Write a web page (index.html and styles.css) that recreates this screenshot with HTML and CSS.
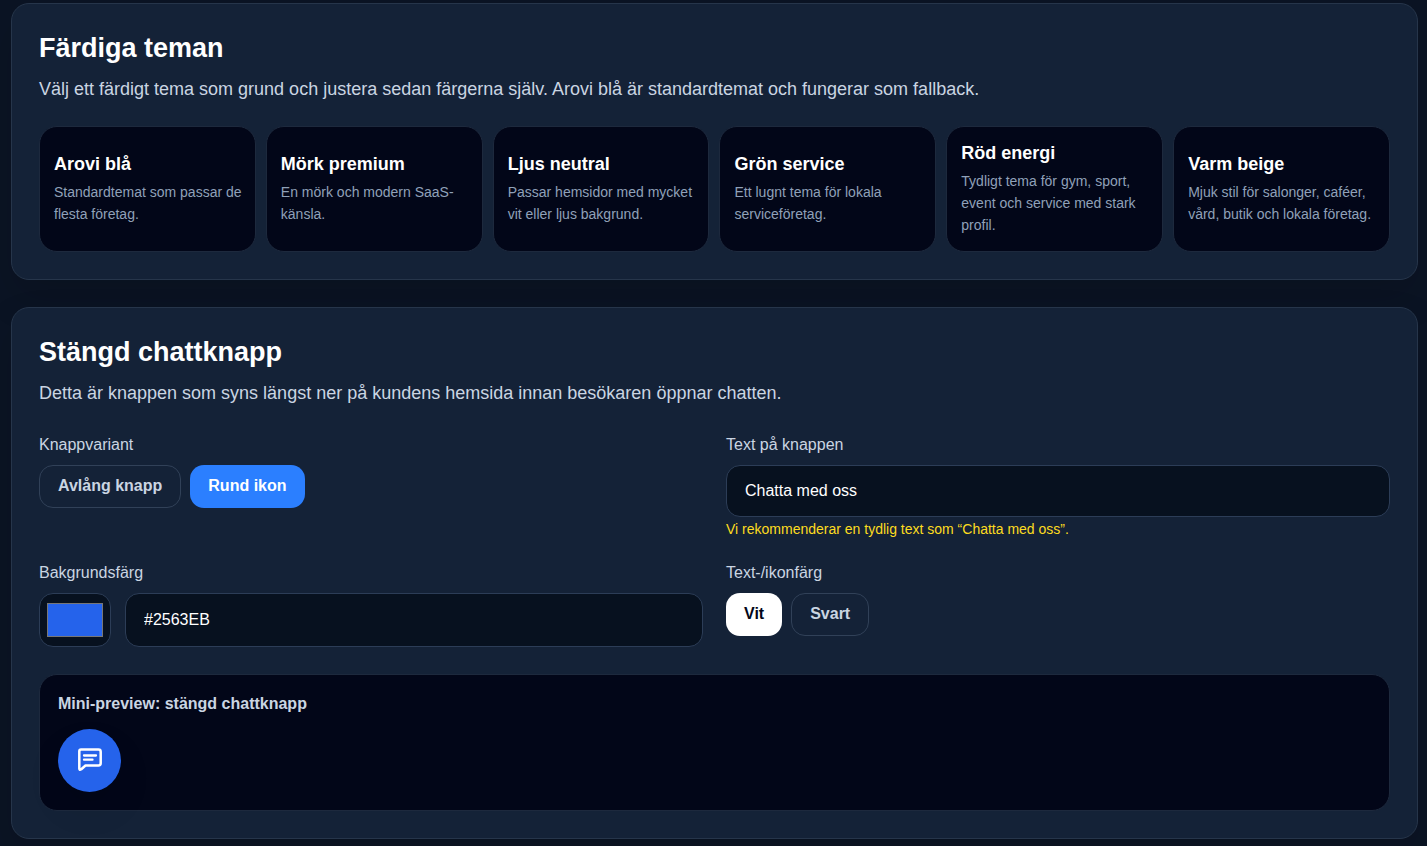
FILE: index.html
```html
<!DOCTYPE html>
<html lang="sv">
<head>
<meta charset="utf-8">
<meta name="viewport" content="width=device-width, initial-scale=1">
<title>Chattutseende</title>
<link rel="stylesheet" href="styles.css">
</head>
<body>
<main class="page">
  <section class="panel">
    <h2 class="panel-title">Färdiga teman</h2>
    <p class="panel-intro">Välj ett färdigt tema som grund och justera sedan färgerna själv. Arovi blå är standardtemat och fungerar som fallback.</p>
    <div class="themes">
      <button type="button" class="theme"><span class="theme-name">Arovi blå</span><span class="theme-text">Standardtemat som passar de flesta företag.</span></button>
      <button type="button" class="theme"><span class="theme-name">Mörk premium</span><span class="theme-text">En mörk och modern SaaS-känsla.</span></button>
      <button type="button" class="theme"><span class="theme-name">Ljus neutral</span><span class="theme-text">Passar hemsidor med mycket vit eller ljus bakgrund.</span></button>
      <button type="button" class="theme"><span class="theme-name">Grön service</span><span class="theme-text">Ett lugnt tema för lokala serviceföretag.</span></button>
      <button type="button" class="theme"><span class="theme-name">Röd energi</span><span class="theme-text">Tydligt tema för gym, sport, event och service med stark profil.</span></button>
      <button type="button" class="theme"><span class="theme-name">Varm beige</span><span class="theme-text">Mjuk stil för salonger, caféer, vård, butik och lokala företag.</span></button>
    </div>
  </section>

  <section class="panel">
    <h2 class="panel-title">Stängd chattknapp</h2>
    <p class="panel-intro">Detta är knappen som syns längst ner på kundens hemsida innan besökaren öppnar chatten.</p>
    <div class="fields">
      <div class="field" role="group" aria-labelledby="variant-label">
        <span class="label" id="variant-label">Knappvariant</span>
        <div class="choices">
          <button type="button" class="choice">Avlång knapp</button>
          <button type="button" class="choice choice-blue" aria-pressed="true">Rund ikon</button>
        </div>
      </div>
      <div class="field">
        <label class="label" for="button-text">Text på knappen</label>
        <input class="text-input" id="button-text" type="text" value="Chatta med oss">
        <p class="hint">Vi rekommenderar en tydlig text som “Chatta med oss”.</p>
      </div>
      <div class="field">
        <label class="label" for="bg-hex">Bakgrundsfärg</label>
        <div class="color-row">
          <input class="color-input" type="color" value="#2563eb" aria-label="Välj bakgrundsfärg">
          <input class="text-input" id="bg-hex" type="text" value="#2563EB">
        </div>
      </div>
      <div class="field" role="group" aria-labelledby="fg-label">
        <span class="label" id="fg-label">Text-/ikonfärg</span>
        <div class="choices">
          <button type="button" class="choice choice-white" aria-pressed="true">Vit</button>
          <button type="button" class="choice">Svart</button>
        </div>
      </div>
    </div>
    <div class="preview">
      <p class="preview-title">Mini-preview: stängd chattknapp</p>
      <button type="button" class="chat-button" aria-label="Öppna chatten">
        <svg class="chat-icon" viewBox="0 0 27 27" fill="none" stroke="currentColor" stroke-linecap="round" stroke-linejoin="round" aria-hidden="true">
          <path stroke-width="2.5" d="M5 2.500H22.500A2.200 2.200 0 0 1 24.700 4.700V16.300A2.200 2.200 0 0 1 22.500 18.500H9.500L5.300 22.300Q3.300 23.600 3.300 21.500V4.200A1.700 1.700 0 0 1 5 2.500Z"/>
          <path stroke-width="2.300" d="M8 8.500H20M8 12.700H16.500"/>
        </svg>
      </button>
    </div>
  </section>
</main>
</body>
</html>
```
FILE: styles.css
```css
* { box-sizing: border-box; }

body {
  margin: 0;
  background: #0b1424;
  color: #fff;
  font-family: "Liberation Sans", Arial, sans-serif;
  font-size: 16px;
  line-height: 24px;
}

h2, p { margin: 0; }

button, input { font: inherit; }
button { cursor: pointer; }

.page {
  display: flex;
  flex-direction: column;
  gap: 27px;
  padding: 3px 9px 7px 11px;
}

.panel {
  padding: 28px 27px 27px;
  border: 1px solid #26354a;
  border-radius: 18px;
  background: #142237;
  box-shadow: 0 18px 40px rgba(0, 0, 0, 0.12);
}

.panel-title {
  font-size: 27px;
  line-height: 32px;
}

.panel-intro {
  margin-top: 11px;
  color: #cad5e2;
  font-size: 18px;
  line-height: 28px;
}

.themes {
  display: grid;
  grid-template-columns: repeat(6, 1fr);
  gap: 10px;
  margin-top: 23px;
}

.theme {
  display: flex;
  flex-direction: column;
  justify-content: center;
  gap: 4px;
  padding: 14px 8px 15px 14px;
  border: 1px solid #1d293d;
  border-radius: 18px;
  background: #020618;
  text-align: left;
}

.theme-name {
  color: #fff;
  font-size: 18px;
  font-weight: 700;
  line-height: 25px;
}

.theme-text {
  color: #90a1b9;
  font-size: 14px;
  line-height: 22px;
}

.fields {
  display: grid;
  grid-template-columns: 1fr 1fr;
  gap: 22px 23px;
  margin-top: 26px;
}

.label {
  display: block;
  margin-bottom: 8px;
  color: #cad5e2;
}

.choices {
  display: flex;
  gap: 9px;
}

.choice {
  padding: 8px 18px 10px;
  border: 1px solid #314158;
  border-radius: 14px;
  background: transparent;
  color: #cad5e2;
  font-weight: 700;
  line-height: 23px;
}

.choice-blue,
.choice-white {
  padding: 9px 18px 11px;
  border: 0;
}

.choice-blue {
  background: #2b7fff;
  color: #fff;
}

.choice-white {
  background: #fff;
  color: #020618;
}

.text-input {
  display: block;
  width: 100%;
  min-width: 0;
  height: 52px;
  padding: 0 18px;
  border: 1px solid #2c3d57;
  border-radius: 14px;
  background: #07111f;
  color: #fff;
}

.hint {
  margin-top: 2px;
  color: #fddc1f;
  font-size: 14px;
  line-height: 20px;
}

.color-row {
  display: flex;
  gap: 14px;
}

.color-row .text-input { height: 54px; }

.color-input {
  flex: none;
  width: 72px;
  height: 54px;
  padding: 5px;
  border: 1px solid #2c3d57;
  border-radius: 14px;
  background: #07111f;
}

.preview {
  margin-top: 27px;
  padding: 17px 18px 18px;
  border: 1px solid #1d293d;
  border-radius: 18px;
  background: #020618;
}

.preview-title {
  margin-bottom: 13px;
  color: #cad5e2;
  font-weight: 700;
}

.chat-button {
  display: flex;
  align-items: center;
  justify-content: center;
  width: 63px;
  height: 63px;
  padding: 0;
  border: 0;
  border-radius: 50%;
  background: #2563eb;
  color: #fff;
  box-shadow: 0 18px 36px rgba(0, 0, 0, 0.08);
}

.chat-icon {
  width: 27px;
  height: 27px;
}
```
